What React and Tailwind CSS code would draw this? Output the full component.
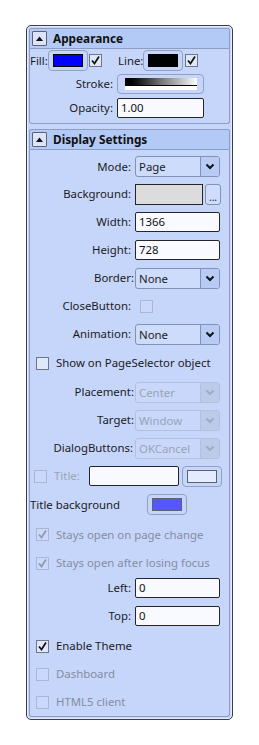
import React from 'react';

const font = { fontFamily: '"Noto Sans", "Open Sans", sans-serif' };

function Check({ on, disabled }) {
  return (
    <span
      className={`w-[13px] h-[13px] border flex items-center justify-center shrink-0 ${
        disabled ? 'border-[#a9b6d4] bg-[#c9d8fb]' : 'border-[#6f7687] bg-[#dfe7fb]'
      }`}
    >
      {on && (
        <svg width="11" height="11" viewBox="0 0 11 11">
          <path
            d="M2 5.5 L4.5 8.5 L9 1.5"
            fill="none"
            stroke={disabled ? '#8f99ad' : '#111'}
            strokeWidth="1.7"
          />
        </svg>
      )}
    </span>
  );
}

function Chevron({ disabled }) {
  return (
    <svg width="10" height="7" viewBox="0 0 10 7">
      <path d="M1.5 1.5 L5 5 L8.5 1.5" fill="none" stroke={disabled ? '#a0acc4' : '#111'} strokeWidth="2" />
    </svg>
  );
}

function Select({ value, disabled }) {
  return (
    <div
      className={`w-[85px] h-[21px] flex rounded-[3px] border ${
        disabled ? 'border-[#b4c0dc] bg-[#c8d7fa] text-[#9aa3b6]' : 'border-[#8392b3] bg-[#cedcfc] text-[#1b1b1b]'
      }`}
    >
      <span className="flex-1 pl-[3px] leading-[19px]">{value}</span>
      <span
        className={`w-[19px] flex items-center justify-center rounded-r-[2px] border-l ${
          disabled ? 'border-[#b4c0dc] bg-[#bccbea]' : 'border-[#8392b3] bg-[#b7cbf5]'
        }`}
      >
        <Chevron disabled={disabled} />
      </span>
    </div>
  );
}

function Input({ value, w = 'w-[85px]' }) {
  return (
    <div className={`${w} h-[20px] border border-[#262626] rounded-[2px] bg-[#f8faff] pl-[3px] leading-[18px] text-[#111]`}>
      {value}
    </div>
  );
}

function Swatch({ color, border = 'border-black' }) {
  return (
    <div className="w-[40px] h-[21px] rounded-[4px] border border-[#93a1c1] flex items-center justify-center">
      <span className={`w-[30px] h-[13px] border ${border}`} style={{ background: color }} />
    </div>
  );
}

function Header({ title }) {
  return (
    <div className="h-[21px] shrink-0 flex items-center bg-[#b3c9f6] border border-[#8e9ec2] rounded-t-[2px]">
      <span className="ml-[2px] w-[15px] h-[15px] border border-[#5e6270] rounded-[1px] bg-[#dbe4fa] flex items-center justify-center">
        <svg width="7" height="5" viewBox="0 0 7 5">
          <path d="M0 5 L3.5 0.5 L7 5 Z" fill="#111" />
        </svg>
      </span>
      <span className="ml-[6px] font-bold text-[11.8px] text-[#111]">{title}</span>
    </div>
  );
}

function Row({ label, h = 'h-[28px]', pr = 'pr-[4px]', children }) {
  return (
    <div className={`${h} flex items-center`}>
      <span className={`w-[105px] text-right ${pr}`}>{label}</span>
      {children}
    </div>
  );
}

function CheckRow({ label, on, disabled, h = 'h-[28px]' }) {
  return (
    <div className={`${h} flex items-center pl-[6px]`}>
      <Check on={on} disabled={disabled} />
      <span className={`ml-[7px] ${disabled ? 'text-[#858da0]' : 'text-[#1b1b1b]'}`}>{label}</span>
    </div>
  );
}

export default function App() {
  return (
    <div className="w-[259px] h-[745px] bg-white pt-[25px] pl-[26px] text-[11.4px] text-[#1b1b1b]" style={font}>
      <div className="w-[207px] h-[695px] flex flex-col border border-[#3b3d42] rounded-[5px] bg-[#c6d6fb] p-[2px] shadow-[inset_0_0_0_1px_#e4ebfd]">
        <Header title="Appearance" />
        <div className="border border-t-0 border-[#8e9ec2] rounded-b-[3px] pb-[3px]">
          <div className="h-[23px] flex items-center">
            <span className="w-[17px]">Fill:</span>
            <span className="ml-[1px]"><Swatch color="#0000ff" /></span>
            <span className="ml-[1px]"><Check on /></span>
            <span className="ml-[16px] w-[23px]">Line:</span>
            <span className="ml-[2px]"><Swatch color="#000000" /></span>
            <span className="ml-[2px]"><Check on /></span>
          </div>
          <div className="h-[24px] flex items-center">
            <span className="w-[87px] text-right pr-[4px]">Stroke:</span>
            <div className="w-[87px] h-[20px] rounded-[4px] border border-[#93a1c1] flex items-center justify-center">
              <div className="w-[72px] h-[12px] bg-gradient-to-r from-black via-[#777] to-white relative">
                <div className="absolute left-0 right-0 top-[7px] h-[1px] bg-black" />
                <div className="absolute left-0 right-0 top-[8px] bottom-0 bg-white" />
              </div>
            </div>
          </div>
          <div className="h-[24px] flex items-center">
            <span className="w-[87px] text-right pr-[4px]">Opacity:</span>
            <Input value="1.00" w="w-[87px]" />
          </div>
        </div>

        <div className="mt-[5px] flex-1 flex flex-col">
          <Header title="Display Settings" />
          <div className="flex-1 border border-t-0 border-[#8e9ec2] rounded-b-[3px] pt-[3px]">
            <Row label="Mode:" h="h-[27px]"><Select value="Page" /></Row>
            <Row label="Background:">
              <div className="w-[68px] h-[21px] border border-[#262626] bg-[#dcdcdc]" />
              <div className="ml-[2px] w-[16px] h-[21px] rounded-[3px] border border-[#8392b3] bg-[#cfdcfb] flex items-end justify-center text-[10px] leading-[14px]">...</div>
            </Row>
            <Row label="Width:"><Input value="1366" /></Row>
            <Row label="Height:"><Input value="728" /></Row>
            <Row label="Border:" pr="pr-[1px]"><Select value="None" /></Row>
            <Row label="CloseButton:">
              <span className="ml-[5px]"><Check disabled /></span>
            </Row>
            <Row label="Animation:"><Select value="None" /></Row>
            <CheckRow label="Show on PageSelector object" h="h-[30px]" />
            <Row label="Placement:" pr="pr-[1px]"><Select value="Center" disabled /></Row>
            <Row label="Target:" pr="pr-[1px]"><Select value="Window" disabled /></Row>
            <Row label="DialogButtons:" pr="pr-[2px]"><Select value="OKCancel" disabled /></Row>
            <div className="h-[28px] flex items-center pl-[4px]">
              <Check disabled />
              <span className="ml-[7px] text-[#9aa3b6]">Title:</span>
              <span className="ml-[9px]"><Input value="" w="w-[90px]" /></span>
              <span className="ml-[3px]"><Swatch color="#e4ebfd" border="border-[#5d6270]" /></span>
            </div>
            <div className="h-[29px] flex items-center">
              <span className="w-[117px]">Title background</span>
              <Swatch color="#5757ff" border="border-[#5d6270]" />
            </div>
            <CheckRow label="Stays open on page change" on disabled h="h-[31px]" />
            <CheckRow label="Stays open after losing focus" on disabled h="h-[26px]" />
            <Row label="Left:" h="h-[24px]"><Input value="0" /></Row>
            <Row label="Top:" h="h-[32px]"><Input value="0" /></Row>
            <CheckRow label="Enable Theme" on />
            <CheckRow label="Dashboard" disabled />
            <CheckRow label="HTML5 client" disabled />
          </div>
        </div>
      </div>
    </div>
  );
}
